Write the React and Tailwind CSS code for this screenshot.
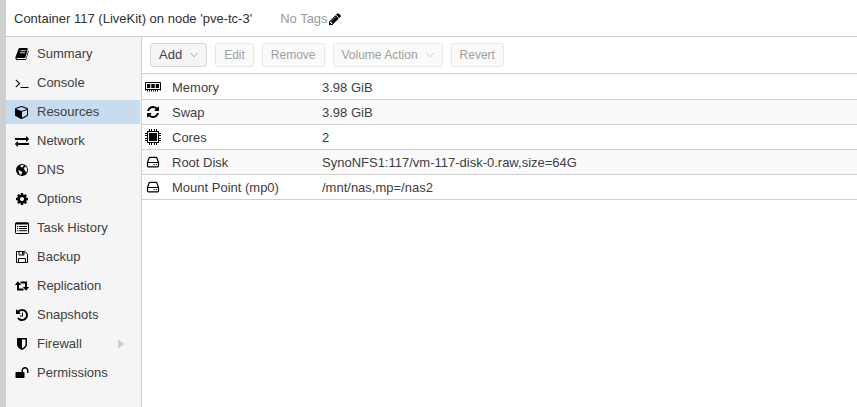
import React from "react";

const solid = {
  terminal: "M649 983l-466 466q-10 10-23 10t-23-10l-50-50q-10-10-10-23t10-23l393-393-393-393q-10-10-10-23t10-23l50-50q10-10 23-10t23 10l466 466q10 10 10 23t-10 23zm1079 457v64q0 14-9 23t-23 9h-960q-14 0-23-9t-9-23v-64q0-14 9-23t23-9h960q14 0 23 9t9 23z",
  cube: "M896 1629l640-349v-636l-640 233v752zm-64-865l698-254-698-254-698 254zm832-252v768q0 35-18 65t-49 47l-704 384q-28 16-61 16t-61-16l-704-384q-31-17-49-47t-18-65v-768q0-40 23-73t61-47l704-256q22-8 44-8t44 8l704 256q38 14 61 47t23 73z",
  exchange: "M1792 1184v192q0 13-9.500 22.500t-22.500 9.500h-1376v192q0 13-9.500 22.500t-22.500 9.500q-12 0-24-10l-319-320q-9-9-9-22 0-14 9-23l320-320q9-9 23-9 13 0 22.500 9.500t9.500 22.500v192h1376q13 0 22.500 9.500t9.500 22.500zm0-544q0 14-9 23l-320 320q-9 9-23 9-13 0-22.500-9.500t-9.500-22.500v-192h-1376q-13 0-22.500-9.500t-9.500-22.500v-192q0-13 9.500-22.500t22.500-9.500h1376v-192q0-14 9-23t23-9q12 0 24 10l319 319q9 9 9 23z",
  cog: "M1152 896q0-106-75-181t-181-75-181 75-75 181 75 181 181 75 181-75 75-181zm512-109v222q0 12-8 23t-20 13l-185 28q-19 54-39 91 35 50 107 138 10 12 10 25t-9 23q-27 37-99 108t-94 71q-12 0-26-9l-138-108q-44 23-91 38-16 136-29 186-7 28-36 28h-222q-14 0-24.500-8.500t-11.500-21.500l-28-184q-49-16-90-37l-141 107q-10 9-25 9-14 0-25-11-126-114-165-168-7-10-7-23 0-12 8-23 15-21 51-66.500t54-70.500q-27-50-41-99l-183-27q-13-2-21-12.500t-8-23.500v-222q0-12 8-23t19-13l186-28q14-46 39-92-40-57-107-138-10-12-10-24 0-10 9-23 26-36 98.500-107.500t94.500-71.500q13 0 26 10l138 107q44-23 91-38 16-136 29-186 7-28 36-28h222q14 0 24.500 8.500t11.500 21.500l28 184q49 16 90 37l142-107q9-9 24-9 13 0 25 10 129 119 165 170 7 8 7 22 0 12-8 23-15 21-51 66.500t-54 70.500q26 50 41 98l183 28q13 2 21 12.500t8 23.500z",
  history: "M1664 896q0 156-61 298t-164 245-245 164-298 61q-172 0-327-72.500t-264-204.500q-7-10-6.500-22.500t8.500-20.500l137-138q10-9 25-9 16 2 23 12 73 95 179 147t225 52q104 0 198.500-40.500t163.500-109.500 109.500-163.500 40.500-198.500-40.500-198.500-109.500-163.500-163.500-109.500-198.500-40.500q-98 0-188 35.500t-160 101.500l137 138q31 30 14 69-17 40-59 40h-448q-26 0-45-19t-19-45v-448q0-42 40-59 39-17 69 14l130 129q107-101 244.500-156.500t284.500-55.500q156 0 298 61t245 164 164 245 61 298zm-640-288v448q0 14-9 23t-23 9h-320q-14 0-23-9t-9-23v-64q0-14 9-23t23-9h224v-352q0-14 9-23t23-9h64q14 0 23 9t9 23z",
  shield: "M1344 960v-640h-448v1137q119-63 213-137 235-184 235-360zm192-768v768q0 86-33.500 170.500t-83 150-118 127.500-126.500 103-121 77.500-89.500 49.500-42.500 20q-12 6-26 6t-26-6q-16-7-42.500-20t-89.500-49.500-121-77.500-126.500-103-118-127.500-83-150-33.500-170.500v-768q0-26 19-45t45-19h1152q26 0 45 19t19 45z",
  unlock: "M1728 576v256q0 26-19 45t-45 19h-64q-26 0-45-19t-19-45v-256q0-106-75-181t-181-75-181 75-75 181v192h96q40 0 68 28t28 68v576q0 40-28 68t-68 28h-960q-40 0-68-28t-28-68v-576q0-40 28-68t68-28h672v-192q0-185 131.500-316.500t316.500-131.500 316.500 131.500 131.500 316.500z",
  refresh: "M1639 1056q0 5-1 7-64 268-268 434.500t-478 166.500q-146 0-282.500-55t-243.500-157l-129 129q-19 19-45 19t-45-19-19-45v-448q0-26 19-45t45-19h448q26 0 45 19t19 45-19 45l-137 137q71 66 161 102t187 36q134 0 250-65t186-179q11-17 53-117 8-23 30-23h192q13 0 22.500 9.500t9.500 22.500zm25-800v448q0 26-19 45t-45 19h-448q-26 0-45-19t-19-45 19-45l138-138q-148-137-349-137-134 0-250 65t-186 179q-11 17-53 117-8 23-30 23h-199q-13 0-22.500-9.500t-9.500-22.500v-7q65-268 270-434.500t480-166.500q146 0 284 55.500t245 156.500l130-129q19-19 45-19t45 19 19 45z",
  pencil: "M491 1536l91-91-235-235-91 91v107h128v128h107zm523-928q0-22-22-22-10 0-17 7l-542 542q-7 7-7 17 0 22 22 22 10 0 17-7l542-542q7-7 7-17zm-54-192l416 416-832 832h-416v-416zm683 96q0 53-37 90l-166 166-416-416 166-165q36-38 90-38 53 0 91 38l235 234q37 39 37 91z",
};

function Solid({ name, className = "size-[14px]" }) {
  return (
    <svg viewBox="0 0 1792 1792" className={`${className} shrink-0`} fill="currentColor" aria-hidden="true">
      <path d={solid[name]} />
    </svg>
  );
}

function Svg({ children, className = "size-[14px]", box = "0 0 14 14" }) {
  return (
    <svg viewBox={box} className={`${className} shrink-0`} fill="none" stroke="currentColor" aria-hidden="true">
      {children}
    </svg>
  );
}

const BookIcon = () => (
  <Svg>
    <path d="M4.600 1H12q1 0 .8 1l-2.300 8.200q-.3.800-1.200.8H2q-.6 0-.4.600.2.400.9.400h7.700q.6 0 .8-.6L13.200 3.600q.6.500.4 1.200l-2.300 7.400q-.3.900-1.300.9H2.300Q.6 13 .4 11.200L.5 10 3.500 2Q3.800 1 4.600 1Z" fill="currentColor" stroke="none" />
    <path d="M5.500 3.700h5.200M4.900 5.800h5.200" stroke="#f5f5f5" strokeWidth="0.900" />
  </Svg>
);

const GlobeIcon = () => (
  <Svg>
    <circle cx="7" cy="7" r="6" fill="currentColor" stroke="none" />
    <path d="M5.200 2.600 7.600 2 9.200 2.500 8 3.600 7.200 4.600 6 4.300ZM9.600 4.200 11 3.600 12 5.400 12.200 7.600 11.200 9.200 10.200 8.200 9.600 6.800 8.600 5.800ZM3 7.600 4.600 7.400 6.400 8.400 7.400 9.400 6.600 10.700 5.900 12 4.600 11.200 4 9.600Z" fill="#f5f5f5" stroke="none" />
  </Svg>
);

const ListIcon = () => (
  <Svg>
    <rect x="0.500" y="2" width="13" height="10.500" rx="0.800" />
    <path d="M0.500 2.500h13" strokeWidth="2" />
    <path d="M2 5.500h1.200M4.200 5.500h7.800M2 7.500h1.200M4.200 7.500h7.800M2 9.700h1.200M4.200 9.700h7.800" />
  </Svg>
);

const FloppyIcon = () => (
  <Svg>
    <path d="M1.500 1.500h8.300l2.700 2.700v8.300h-11z" strokeLinejoin="round" />
    <path d="M4 1.500v3.500h5v-3.500M3.500 12.500v-4h7v4" />
    <path d="M7 1.500h1.500v3h-1.500z" fill="currentColor" stroke="none" />
  </Svg>
);

const RetweetIcon = () => (
  <Svg>
    <path d="M3 5v5.500h5.500M11 9v-5.500h-5.500" strokeWidth="2" />
    <path d="M-.2 6 3 2.200 6.200 6ZM7.800 8 11 11.800 14.200 8Z" fill="currentColor" stroke="none" />
  </Svg>
);

const MemoryIcon = () => (
  <Svg className="size-4" box="0 0 16 16">
    <path d="M0.500 11.500v-8h15v8" />
    <path d="M0 10.500h16" />
    <path d="M2 5h3.300v4h-3.300zM6.300 5h3.400v4h-3.400zM10.700 5h3.300v4h-3.300z" fill="currentColor" stroke="none" />
    <path d="M2.500 11v1.500M4.500 11v1.500M6.500 11v1.500M8.500 11v1.500M10.500 11v1.500M12.500 11v1.500" />
  </Svg>
);

const CpuIcon = () => (
  <Svg className="size-4" box="0 0 16 16">
    <rect x="2.500" y="2.500" width="11" height="11" />
    <rect x="4" y="4" width="8" height="8" fill="currentColor" stroke="none" />
    <path d="M4.500 0v2M6.500 0v2M9.500 0v2M11.500 0v2M4.500 14v2M6.500 14v2M9.500 14v2M11.500 14v2M0 4.500h2M0 6.500h2M0 9.500h2M0 11.500h2M14 4.500h2M14 6.500h2M14 9.500h2M14 11.500h2" />
  </Svg>
);

const DiskIcon = () => (
  <Svg>
    <path d="M1.500 7.500 3.200 2.800q.2-.5.8-.5h6q.6 0 .8.500l1.700 4.700v3.500q0 .8-.8.800h-9.400q-.8 0-.8-.8ZM1.500 7.500h11" strokeLinejoin="round" strokeWidth="1.200" />
    <path d="M7.500 9.700h1.200M9.800 9.700h1.200" />
  </Svg>
);

const nav = [
  ["Summary", <BookIcon />],
  ["Console", <Solid name="terminal" />],
  ["Resources", <Solid name="cube" />],
  ["Network", <Solid name="exchange" />],
  ["DNS", <GlobeIcon />],
  ["Options", <Solid name="cog" />],
  ["Task History", <ListIcon />],
  ["Backup", <FloppyIcon />],
  ["Replication", <RetweetIcon />],
  ["Snapshots", <Solid name="history" />],
  ["Firewall", <Solid name="shield" />],
  ["Permissions", <Solid name="unlock" />],
];

const rows = [
  ["Memory", "3.98 GiB", <MemoryIcon />],
  ["Swap", "3.98 GiB", <Solid name="refresh" />],
  ["Cores", "2", <CpuIcon />],
  ["Root Disk", "SynoNFS1:117/vm-117-disk-0.raw,size=64G", <DiskIcon />],
  ["Mount Point (mp0)", "/mnt/nas,mp=/nas2", <DiskIcon />],
];

function ToolButton({ children, menu, disabled }) {
  return (
    <button
      type="button"
      disabled={disabled}
      className={`flex h-6 items-center gap-2 rounded-[3px] border px-2 whitespace-nowrap ${
        disabled ? "border-[#e8e8e8] bg-[#fafafa] text-xs text-[#a0a0a0]" : "border-[#d5d5d5] bg-[#f5f5f5]"
      }`}
    >
      {children}
      {menu && (
        <svg viewBox="0 0 8 6" className={`h-[6px] w-2 ${disabled ? "text-[#ccc]" : "text-[#aaa]"}`} fill="none" stroke="currentColor" aria-hidden="true">
          <path d="M0.500 1 4 4.800 7.500 1" />
        </svg>
      )}
    </button>
  );
}

export default function App() {
  return (
    <div className="flex min-h-screen flex-col border-l-[6px] border-[#cfcfcf] bg-white font-['Liberation_Sans',Arial,sans-serif] text-[13px] leading-4 text-[#404040]">
      <header className="flex h-[37px] items-center border-b border-[#cfcfcf] pt-0.5 pl-2">
        <h1 className="mr-7 text-[#303030]">Container 117 (LiveKit) on node 'pve-tc-3'</h1>
        <span className="text-[#999]">No Tags</span>
        <button type="button" aria-label="Edit tags" className="text-black">
          <Solid name="pencil" />
        </button>
      </header>
      <div className="flex flex-1">
        <nav className="flex w-[136px] shrink-0 flex-col gap-[5px] border-r border-[#cfcfcf] bg-[#f5f5f5] pt-[5px] pr-px">
          {nav.map(([label, icon]) => (
            <a
              key={label}
              href="#"
              aria-current={label === "Resources" ? "page" : undefined}
              className={`flex h-6 items-center gap-2 pl-2 ${label === "Resources" ? "bg-[#c8dcf0]" : ""}`}
            >
              <span className="flex w-[15px] justify-center text-black">{icon}</span>
              <span>{label}</span>
              {label === "Firewall" && (
                <svg viewBox="0 0 6 10" className="mr-4 ml-auto h-[10px] w-[6px]" fill="#cfcfcf" aria-hidden="true">
                  <path d="M0 0 6 5 0 10Z" />
                </svg>
              )}
            </a>
          ))}
        </nav>
        <main className="min-w-0 flex-1">
          <div className="flex h-[37px] items-center gap-2 border-b border-[#cfcfcf] pl-2">
            <ToolButton menu>Add</ToolButton>
            <ToolButton disabled>Edit</ToolButton>
            <ToolButton disabled>Remove</ToolButton>
            <ToolButton disabled menu>Volume Action</ToolButton>
            <ToolButton disabled>Revert</ToolButton>
          </div>
          <table className="mt-px w-full table-fixed border-separate border-spacing-0">
            <colgroup>
              <col className="w-[30px]" />
              <col className="w-[150px]" />
              <col />
            </colgroup>
            <tbody>
              {rows.map(([label, value, icon]) => (
                <tr key={label} className="even:bg-[#fafafa]">
                  <td className="h-[25px] border-b border-[#cfcfcf] p-0">
                    <span className="flex w-[22px] justify-center text-black">{icon}</span>
                  </td>
                  <th scope="row" className="border-b border-[#cfcfcf] p-0 pt-0.5 text-left font-normal">{label}</th>
                  <td className="border-b border-[#cfcfcf] p-0 pt-0.5">{value}</td>
                </tr>
              ))}
            </tbody>
          </table>
        </main>
      </div>
    </div>
  );
}
